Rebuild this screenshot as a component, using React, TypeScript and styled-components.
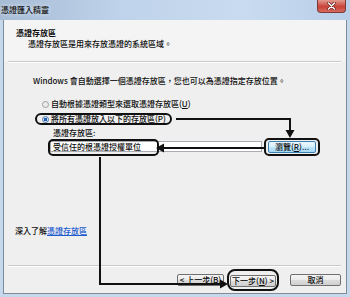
import React from 'react';
import styled, { createGlobalStyle } from 'styled-components';

const GlobalStyle = createGlobalStyle`
  html, body {
    margin: 0;
    padding: 0;
    background: #ffffff;
  }
`;

const cjk = `"Noto Sans CJK TC", "Noto Sans", sans-serif`;

const Window = styled.div`
  position: relative;
  width: 350px;
  height: 297px;
  display: flex;
  flex-direction: column;
  overflow: hidden;
  font-family: ${cjk};
  font-size: 8px;
  font-weight: 500;
  line-height: 10px;
  color: #0e0e0e;
  background: #c6d8ec;
`;

const TitleBar = styled.div`
  height: 20px;
  flex: none;
  display: flex;
  align-items: flex-start;
  background: linear-gradient(to right, #a7bcd5 0%, #bfd3ea 35%, #c8dbf0 70%, #b9cfe8 100%);
`;

const TitleText = styled.span`
  margin: 5px 0 0 1px;
  color: #111;
  text-shadow: 0 0 4px #e8f0fa;
`;

const CloseButton = styled.div`
  margin-left: auto;
  margin-right: 4px;
  width: 29px;
  height: 13px;
  display: flex;
  align-items: center;
  justify-content: center;
  border: 1px solid #7a3a3a;
  border-top: none;
  border-radius: 0 0 4px 4px;
  background: linear-gradient(to bottom, #e39b8f, #c8433a 55%, #d86a5c);
  box-sizing: border-box;
`;

const Frame = styled.div`
  flex: 1;
  display: flex;
  padding: 0 3px 3px;
`;

const Content = styled.div`
  flex: 1;
  display: flex;
  flex-direction: column;
  background: #efefef;
  border: 1px solid #7f8b99;
  border-top: none;
`;

const Header = styled.div`
  height: 41px;
  box-sizing: border-box;
  padding: 8px 0 0 12px;
  background: #f4f4f4;
`;

const HeaderTitle = styled.div`
  font-weight: bold;
`;

const HeaderSub = styled.div`
  padding-left: 12px;
  margin-top: 1px;
`;

const Separator = styled.div`
  margin: 0 5px 0 4px;
  border-top: 1px solid #c9c9c9;
  border-bottom: 1px solid #ffffff;
`;

const Body = styled.div`
  flex: 1;
  display: flex;
  flex-direction: column;
  align-items: flex-start;
  padding-left: 11px;
`;

const Intro = styled.div`
  margin: 13px 0 0 18px;
`;

const RadioGroup = styled.div`
  display: flex;
  flex-direction: column;
  align-items: flex-start;
  gap: 3px;
  margin: 12px 0 0 20px;
`;

const RadioRow = styled.label<{ $marked?: boolean }>`
  display: inline-flex;
  align-items: center;
  height: 12px;
  box-sizing: border-box;
  padding: 0 4px 0 5px;
  border: 2px solid ${(p) => (p.$marked ? '#111' : 'transparent')};
  border-radius: 6px;
`;

const RadioDot = styled.span<{ $checked?: boolean }>`
  width: 7px;
  height: 7px;
  box-sizing: border-box;
  border-radius: 50%;
  border: 1px solid ${(p) => (p.$checked ? '#4f74a3' : '#9a9a9a')};
  background: ${(p) =>
    p.$checked
      ? 'radial-gradient(circle, #1f5fb8 0 1.6px, #dfe9f5 2px)'
      : 'radial-gradient(circle, #e4e4e4, #f7f7f7)'};
  margin-right: 2px;
`;

const FieldLabel = styled.div`
  margin: 3px 0 0 38px;
`;

const StoreRow = styled.div`
  display: flex;
  align-items: center;
  margin-left: 35px;
  height: 17px;
`;

const TextBox = styled.div`
  position: relative;
  width: 212px;
  height: 11px;
  box-sizing: border-box;
  border: 1px solid #a9acb3;
  background: #ffffff;
  padding-left: 2px;
  line-height: 9px;
`;

const TextMark = styled.span`
  position: absolute;
  top: -3px;
  bottom: -5px;
  left: -3px;
  width: 107px;
  border: 2px solid #111;
  border-radius: 5px;
`;

const Marked = styled.div<{ $pad: string; $radius: number }>`
  display: flex;
  padding: ${(p) => p.$pad};
  border: 2px solid #111;
  border-radius: ${(p) => p.$radius}px;
`;

const Button = styled.div<{ $w: number; $hot?: boolean }>`
  width: ${(p) => p.$w}px;
  height: 12px;
  box-sizing: border-box;
  display: flex;
  align-items: center;
  justify-content: center;
  border: 1px solid ${(p) => (p.$hot ? '#3c7fb1' : '#707070')};
  border-radius: 2px;
  background: ${(p) =>
    p.$hot
      ? 'linear-gradient(to bottom, #eaf6fd 0%, #d9f0fc 50%, #bee6fd 51%, #a7d9f5 100%)'
      : 'linear-gradient(to bottom, #f4f4f4 0%, #ebebeb 50%, #dddddd 51%, #cfcfcf 100%)'};
  line-height: 10px;
  white-space: nowrap;
`;

const LearnMore = styled.div`
  margin-top: auto;
  margin-bottom: 29px;
`;

const Link = styled.span`
  color: #1d5ccf;
  text-decoration: underline;
`;

const ButtonRow = styled.div`
  height: 26px;
  display: flex;
  align-items: center;
  justify-content: flex-end;
  padding-right: 5px;
`;

const Gap = styled.span<{ $w: number }>`
  width: ${(p) => p.$w}px;
`;

const Overlay = styled.svg`
  position: absolute;
  left: 0;
  top: 0;
  pointer-events: none;
`;

const App: React.FC = () => {
  return (
    <>
      <GlobalStyle />
      <Window>
        <TitleBar>
          <TitleText>憑證匯入精靈</TitleText>
          <CloseButton>
            <svg width="9" height="8" viewBox="0 0 9 8">
              <path d="M1.5 1 L7.5 7 M7.5 1 L1.5 7" stroke="#5a1c1c" strokeWidth="2.6" strokeLinecap="round" />
              <path d="M1.5 1 L7.5 7 M7.5 1 L1.5 7" stroke="#ffffff" strokeWidth="1.5" strokeLinecap="round" />
            </svg>
          </CloseButton>
        </TitleBar>
        <Frame>
          <Content>
            <Header>
              <HeaderTitle>憑證存放區</HeaderTitle>
              <HeaderSub>憑證存放區是用來存放憑證的系統區域。</HeaderSub>
            </Header>
            <Separator />
            <Body>
              <Intro>Windows 會自動選擇一個憑證存放區，您也可以為憑證指定存放位置。</Intro>
              <RadioGroup>
                <RadioRow>
                  <RadioDot />
                  自動根據憑證類型來選取憑證存放區(<u>U</u>)
                </RadioRow>
                <RadioRow $marked>
                  <RadioDot $checked />
                  將所有憑證放入以下的存放區(<u>P</u>)
                </RadioRow>
              </RadioGroup>
              <FieldLabel>憑證存放區:</FieldLabel>
              <StoreRow>
                <TextBox>
                  受信任的根憑證授權單位
                  <TextMark />
                </TextBox>
                <Gap $w={2} />
                <Marked $pad="1px 2px" $radius={5}>
                  <Button $w={48} $hot>
                    瀏覽(<u>R</u>)...
                  </Button>
                </Marked>
              </StoreRow>
              <LearnMore>
                深入了解<Link>憑證存放區</Link>
              </LearnMore>
            </Body>
            <Separator />
            <ButtonRow>
              <Button $w={47}>
                &lt; 上一步(<u>B</u>)
              </Button>
              <Gap $w={3} />
              <Marked $pad="4px 1px 2px" $radius={8}>
                <Button $w={46}>
                  下一步(<u>N</u>) &gt;
                </Button>
              </Marked>
              <Gap $w={11} />
              <Button $w={51}>取消</Button>
            </ButtonRow>
          </Content>
        </Frame>
        <Overlay width="350" height="297" viewBox="0 0 350 297">
          <g stroke="#111" strokeWidth="2" fill="none">
            <path d="M176 119 H290 V131" />
            <path d="M264 148 H163" />
            <path d="M100 157 V284 H221" />
          </g>
          <g fill="#111">
            <polygon points="285.5,130 294.5,130 290,138" />
            <polygon points="164,143.5 164,152.5 156,148" />
            <polygon points="220,279.5 220,288.5 228,284" />
          </g>
        </Overlay>
      </Window>
    </>
  );
};

export default App;
